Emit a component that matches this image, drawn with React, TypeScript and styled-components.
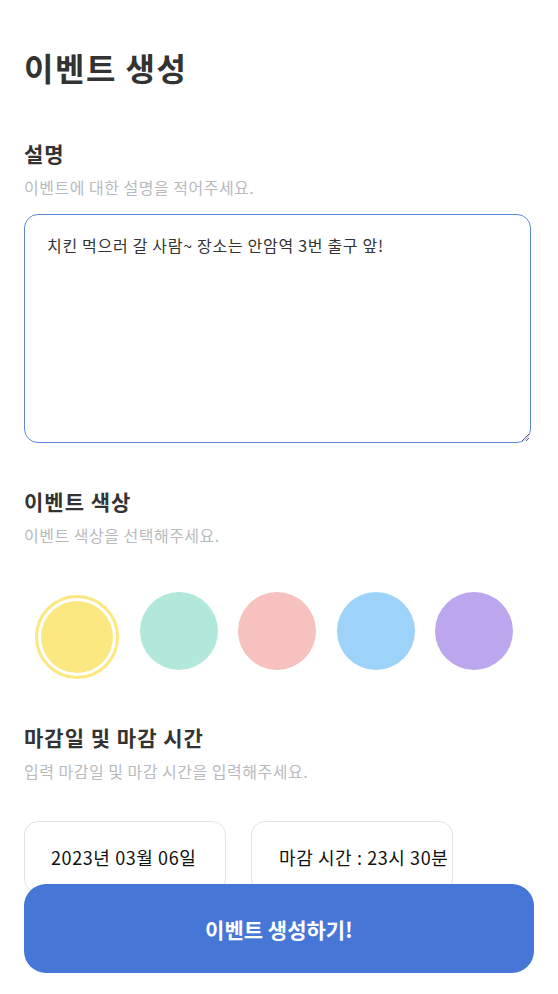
import React, { useState } from "react";
import styled, { createGlobalStyle } from "styled-components";

const GlobalStyle = createGlobalStyle`
  * {
    box-sizing: border-box;
  }
  body {
    margin: 0;
    background: #ffffff;
    font-family: "Noto Sans CJK KR", "Noto Sans", sans-serif;
    color: #333333;
  }
`;

const Page = styled.div`
  display: flex;
  flex-direction: column;
  padding: 47px 24px 120px 24px;
`;

const PageTitle = styled.h1`
  margin: 0;
  font-size: 32px;
  line-height: 40px;
  font-weight: 700;
  letter-spacing: 1.5px;
  color: #333333;
`;

const Section = styled.section<{ $top: number }>`
  display: flex;
  flex-direction: column;
  margin-top: ${(p) => p.$top}px;
`;

const SectionTitle = styled.h2`
  margin: 0;
  font-size: 21px;
  line-height: 28px;
  font-weight: 700;
  letter-spacing: 1px;
  color: #333333;
`;

const SectionDesc = styled.p`
  margin: 10px 0 0 0;
  font-size: 16px;
  line-height: 20px;
  letter-spacing: 0.5px;
  color: #b8babe;
`;

const DescInput = styled.textarea`
  margin-top: 17px;
  width: 507px;
  height: 229px;
  padding: 19px 22px;
  border: 1.5px solid #5f88dc;
  border-radius: 14px;
  font-family: "Noto Sans CJK KR", "Noto Sans", sans-serif;
  font-size: 16px;
  line-height: 22px;
  letter-spacing: 0.7px;
  color: #333333;
  outline: none;
  resize: vertical;
`;

const ColorRow = styled.div`
  display: flex;
  align-items: flex-start;
  gap: 20.5px;
  margin-top: 47px;
  padding-left: 11px;
`;

const ColorDot = styled.button<{ $color: string; $selected: boolean }>`
  flex: none;
  width: ${(p) => (p.$selected ? 84 : 78)}px;
  height: ${(p) => (p.$selected ? 84 : 78)}px;
  margin-top: ${(p) => (p.$selected ? 3 : 0)}px;
  padding: ${(p) => (p.$selected ? 3 : 0)}px;
  border-radius: 50%;
  border: ${(p) => (p.$selected ? `3px solid ${p.$color}` : "none")};
  background: ${(p) => p.$color};
  background-clip: content-box;
  cursor: pointer;
`;

const DeadlineRow = styled.div`
  display: flex;
  gap: 25px;
  margin-top: 40px;
`;

const DeadlineBox = styled.div<{ $pad: number }>`
  display: flex;
  align-items: center;
  width: 202px;
  height: 72px;
  padding-left: ${(p) => p.$pad}px;
  border: 1px solid #e2e2e2;
  border-radius: 14px;
  font-size: 18px;
  letter-spacing: 0.6px;
  color: #111111;
  white-space: nowrap;
`;

const SubmitButton = styled.button`
  position: fixed;
  left: 24px;
  right: 24px;
  bottom: 21px;
  height: 89px;
  border: none;
  border-radius: 22px;
  background: #4677d7;
  color: #ffffff;
  font-family: "Noto Sans CJK KR", "Noto Sans", sans-serif;
  font-size: 21px;
  font-weight: 700;
  cursor: pointer;
`;

const COLORS = ["#fbe880", "#b2e8da", "#f6c1be", "#9dd2f9", "#bca7ef"];

export default function App() {
  const [selected, setSelected] = useState(0);

  return (
    <>
      <GlobalStyle />
      <Page>
        <PageTitle>이벤트 생성</PageTitle>

        <Section $top={52}>
          <SectionTitle>설명</SectionTitle>
          <SectionDesc>이벤트에 대한 설명을 적어주세요.</SectionDesc>
          <DescInput
            autoFocus
            defaultValue="치킨 먹으러 갈 사람~ 장소는 안암역 3번 출구 앞!"
          />
        </Section>

        <Section $top={44}>
          <SectionTitle>이벤트 색상</SectionTitle>
          <SectionDesc>이벤트 색상을 선택해주세요.</SectionDesc>
          <ColorRow>
            {COLORS.map((c, i) => (
              <ColorDot
                key={c}
                $color={c}
                $selected={i === selected}
                onClick={() => setSelected(i)}
              />
            ))}
          </ColorRow>
        </Section>

        <Section $top={44}>
          <SectionTitle>마감일 및 마감 시간</SectionTitle>
          <SectionDesc>입력 마감일 및 마감 시간을 입력해주세요.</SectionDesc>
          <DeadlineRow>
            <DeadlineBox $pad={26}>2023년 03월 06일</DeadlineBox>
            <DeadlineBox $pad={27}>마감 시간 : 23시 30분</DeadlineBox>
          </DeadlineRow>
        </Section>
      </Page>
      <SubmitButton>이벤트 생성하기!</SubmitButton>
    </>
  );
}
